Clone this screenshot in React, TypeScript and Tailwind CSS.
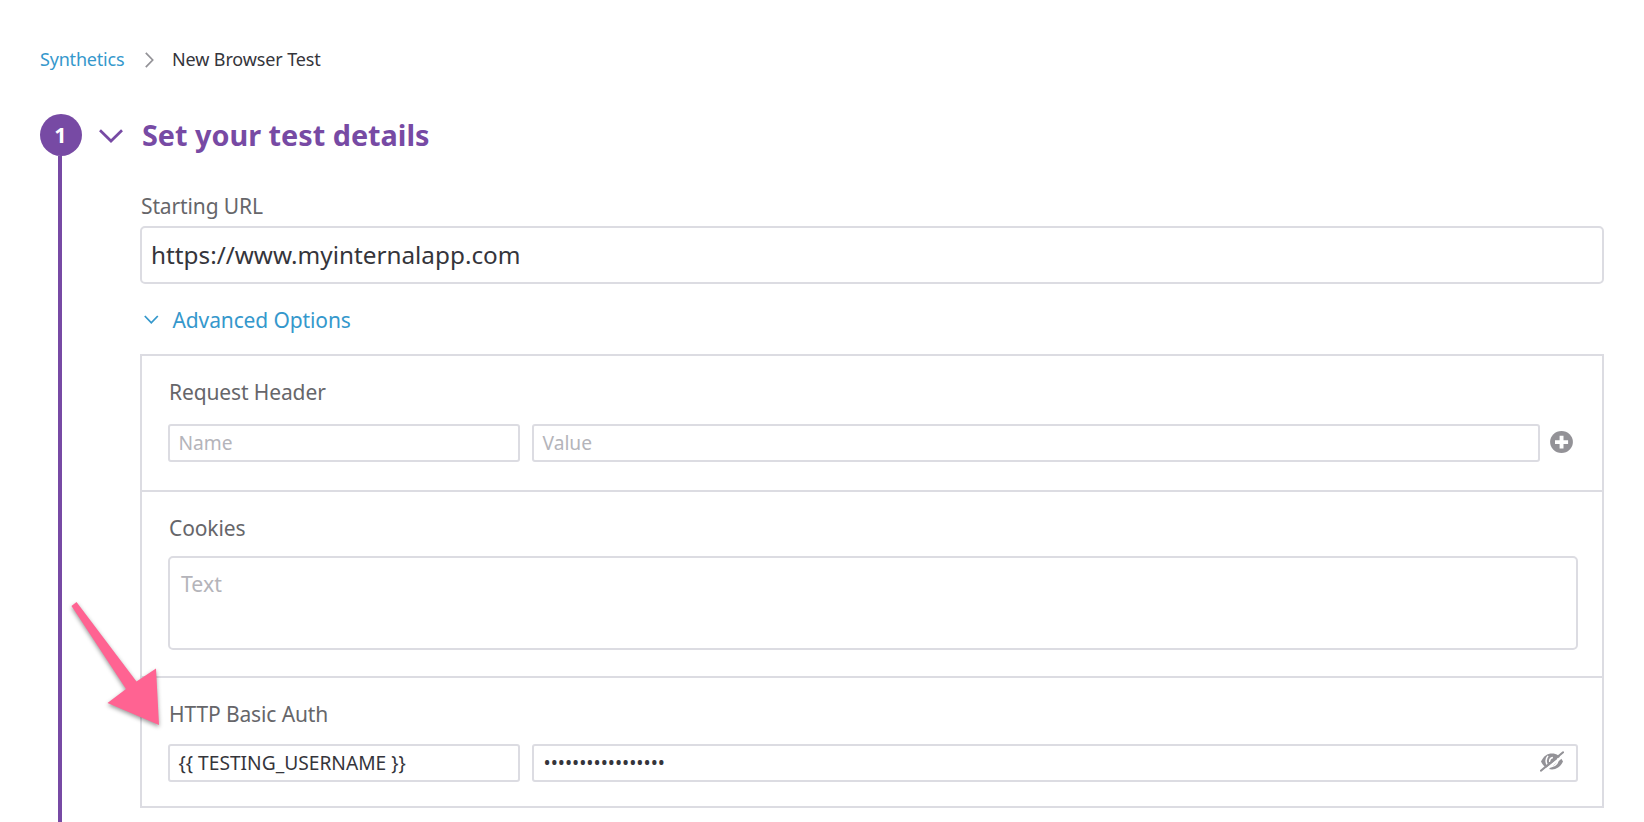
import type { ReactNode } from "react";

function Label({ children }: { children: ReactNode }) {
  return <div className="h-7 text-[21px] leading-7 tracking-[-0.12px] whitespace-nowrap text-[#66666a]">{children}</div>;
}

function Field({ children, className = "" }: { children: ReactNode; className?: string }) {
  return (
    <div className={`flex h-[38px] items-center rounded-[3px] border-2 border-[#dcdce2] bg-white pl-[8.500px] text-[19.200px] whitespace-nowrap ${className}`}>
      {children}
    </div>
  );
}

function PlusIcon() {
  return (
    <svg width="23" height="22" viewBox="0 0 23 22" className="block">
      <ellipse cx="11.5" cy="11" rx="11.4" ry="11" fill="#939297" />
      <path d="M9.6 4.7h3.9v4.5h4.6v3.7h-4.6v4.5H9.6v-4.5H5V9.200h4.600z" fill="#fff" />
    </svg>
  );
}

function EyeOffIcon() {
  return (
    <svg width="24" height="21" viewBox="0 0 24 21" className="block" fill="none">
      <path d="M1 10.500C3.500 5 7.500 2.400 12 2.400s8.500 2.600 11 8.100C20.500 15.800 16.500 18.400 12 18.400S3.500 15.800 1 10.500Z" fill="#939297" />
      <path d="M8 4.900C5.800 7.600 5.700 11.200 7.400 14" stroke="#fff" strokeWidth="1.500" />
      <path d="M17.500 6.500c1.300 4.500-1.200 8.700-6.500 9.300" stroke="#fff" strokeWidth="1.500" />
      <path d="M9.700 11c-.3-2.500.9-4.300 3.200-4.600" stroke="#fff" strokeWidth="1.500" />
      <path d="M2.400 21.600 25 3.300" stroke="#fff" strokeWidth="2.600" />
      <path d="M.9 19.700 23.100 1.300" stroke="#939297" strokeWidth="2.100" strokeLinecap="round" />
    </svg>
  );
}

export default function App() {
  return (
    <div className="relative h-[822px] w-[1644px] overflow-hidden bg-white pl-10 font-['Noto_Sans','Open_Sans',sans-serif] text-[#35353b]">
      <nav className="flex h-[114px] items-start pt-[47px] text-[18px] leading-6 whitespace-nowrap">
        <a className="w-[105px] text-[#3598cc]"><span className="tracking-[-0.2px]">Synthetics</span></a>
        <svg width="9" height="16" viewBox="0 0 9 16" className="mt-[5px] mr-[18px]" fill="none" stroke="#939297" strokeWidth="1.700">
          <path d="M.8.8 7.700 8 .8 15.200" />
        </svg>
        <span className="tracking-[-0.12px]">New Browser Test</span>
      </nav>

      <div className="flex h-[708px]">
        <div className="flex w-[42px] flex-col items-center">
          <div className="flex size-[42px] shrink-0 items-center justify-center rounded-full bg-[#774aa4] pr-px text-[21.500px] leading-6 font-bold text-white">1</div>
          <div className="mr-0.5 w-1 grow bg-[#774aa4]" />
        </div>

        <main className="ml-[17px] w-[1505px]">
          <header className="flex h-[42px] items-center">
            <svg width="24" height="14" viewBox="0 0 24 14" className="mt-px mr-[19px]" fill="none" stroke="#774aa4" strokeWidth="2.700">
              <path d="M1 1.200 12 12 23 1.200" />
            </svg>
            <h1 className="text-[28.800px] leading-10 font-bold whitespace-nowrap text-[#774aa4]">Set your test details</h1>
          </header>

          <div className="ml-[41px] pt-9">
            <div className="pl-px"><Label>Starting URL</Label></div>
            <div className="mt-1.5 flex h-[58px] items-center rounded-[5px] border-2 border-[#dcdce2] pl-[9px] text-[24.300px] leading-8">https://www.myinternalapp.com</div>
            <div className="mt-[22px] flex h-7 items-center pl-[3.500px] text-[21px] leading-7 tracking-[-0.12px] text-[#3598cc]">
              <svg width="15" height="10" viewBox="0 0 15 10" className="mr-[14px]" fill="none" stroke="#3598cc" strokeWidth="1.800">
                <path d="M.8 1 7.300 7.800 13.800 1" />
              </svg>
              Advanced Options
            </div>

            <div className="mt-5 h-[454px] border-2 border-[#dcdce2]">
              <section className="h-[136px] border-b-2 border-[#dcdce2] pt-[22px] pl-[26px] leading-7">
                <div className="pl-px"><Label>Request Header</Label></div>
                <div className="mt-[18px] flex items-center text-[#b4b4ba]">
                  <Field className="w-[352px]">Name</Field>
                  <Field className="ml-3 w-[1008px]">Value</Field>
                  <button className="mb-0.5 ml-[9.500px]"><PlusIcon /></button>
                </div>
              </section>
              <section className="h-[186px] border-b-2 border-[#dcdce2] pt-[22px] pl-[26px]">
                <div className="pl-px"><Label>Cookies</Label></div>
                <div className="mt-[14px] h-[94px] w-[1410px] rounded-[5px] border-2 border-[#dcdce2] pt-3 pl-[11px] text-[21.300px] leading-7 text-[#b4b4ba]">Text</div>
              </section>
              <section className="pt-[22px] pl-[26px] leading-7">
                <div className="pl-px"><Label>HTTP Basic Auth</Label></div>
                <div className="mt-4 flex">
                  <Field className="w-[352px]">{"{{ TESTING_USERNAME }}"}</Field>
                  <Field className="ml-3 w-[1046px] justify-between pr-3">
                    <span className="pl-px text-[19px]">•••••••••••••••••</span>
                    <button className="mb-1"><EyeOffIcon /></button>
                  </Field>
                </div>
              </section>
            </div>
          </div>
        </main>
      </div>

      <svg width="110" height="140" viewBox="66 596 110 140" className="absolute top-[596px] left-[66px]">
        <path d="M71.500 606 76.500 602 136.500 681.500 156 668.500 159 725 107.500 703 126 689Z" fill="#ff6392" className="drop-shadow-[0_2px_2px_rgba(0,0,0,0.4)]" />
      </svg>
    </div>
  );
}
